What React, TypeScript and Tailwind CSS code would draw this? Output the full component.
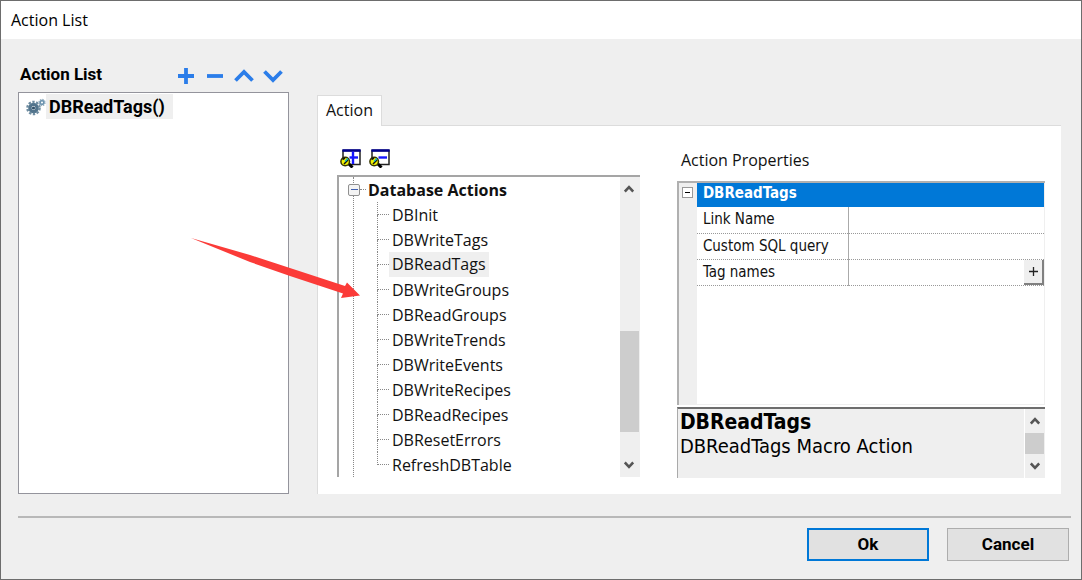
import type { ReactNode } from 'react';

const actions = [
  'DBInit',
  'DBWriteTags',
  'DBReadTags',
  'DBWriteGroups',
  'DBReadGroups',
  'DBWriteTrends',
  'DBWriteEvents',
  'DBWriteRecipes',
  'DBReadRecipes',
  'DBResetErrors',
  'RefreshDBTable',
];

const properties = ['Link Name', 'Custom SQL query', 'Tag names'];

function ToolButton({ label, children }: { label: string; children: ReactNode }) {
  return (
    <button type="button" aria-label={label} className="flex size-5 items-center justify-center">
      <svg viewBox="0 0 20 20" className="size-5" fill="none" stroke="#2b7de9" strokeWidth="3.8">
        {children}
      </svg>
    </button>
  );
}

function Gears() {
  return (
    <svg viewBox="0 0 20 18" className="h-[18px] w-5 shrink-0" fill="none">
      <circle cx="7.5" cy="10" r="3.6" stroke="#52748c" strokeWidth="3.4" />
      <circle cx="7.5" cy="10" r="6" stroke="#6f8da1" strokeWidth="2.6" strokeDasharray="2.3 1.47" />
      <circle cx="7.5" cy="10" r="1.6" fill="#2e4f68" />
      <circle cx="16" cy="4.5" r="1.9" stroke="#6b93af" strokeWidth="1.8" />
      <circle cx="16" cy="4.5" r="3" stroke="#8fabbd" strokeWidth="1.4" strokeDasharray="1.3 1.05" />
    </svg>
  );
}

function TreeToolIcon({ plus }: { plus?: boolean }) {
  return (
    <svg viewBox="0 0 21 20" className="h-5 w-[21px]" fill="none">
      <rect x="3" y="2.5" width="17" height="14" fill="#fff" stroke="#222" strokeWidth="1.5" />
      <path d="M2.4 2.5H20.6" stroke="#00008b" strokeWidth="2.6" />
      <path d="M9.5 9.5H18" stroke="#1515ff" strokeWidth="2.4" />
      {plus && <path d="M13 3.5V16" stroke="#1515ff" strokeWidth="2.4" />}
      <path d="M8.5 15.5L12.5 19.5" stroke="#000" strokeWidth="3" />
      <circle cx="5.2" cy="13.5" r="4.3" fill="#f2f200" stroke="#333300" strokeWidth="1.5" />
      <path d="M2.5 11.5L5 10M4 16L8 12" stroke="#111" strokeWidth="1.5" />
      <path d="M5 13.5L8 10.5" stroke="#00b8c8" strokeWidth="1.4" />
    </svg>
  );
}

function ScrollButton({ up }: { up?: boolean }) {
  return (
    <button
      type="button"
      aria-label={up ? 'Scroll up' : 'Scroll down'}
      className="flex h-6 w-full shrink-0 items-center justify-center pr-px"
    >
      <svg viewBox="0 0 10 8" className="h-2 w-2.5" fill="none" stroke="#555" strokeWidth="2.6">
        <path d={up ? 'M.8 6.5L5 2.2L9.2 6.5' : 'M.8 1.5L5 5.8L9.2 1.5'} />
      </svg>
    </button>
  );
}

function ActionTree() {
  return (
    <div className="flex border-t-2 border-l-2 border-[#a5a5a5] bg-white">
      <ul role="tree" aria-label="Actions" className="ml-3.5 flex-1 border-l border-dotted border-[#888]">
        <li role="treeitem" aria-expanded="true">
          <div className="flex h-[25px] items-center">
            <button
              type="button"
              aria-label="Collapse Database Actions"
              className="-ml-1.5 flex size-3 items-center justify-center rounded-xs border border-[#909090] bg-[#f4f4f4]"
            >
              <span className="h-px w-[7px] bg-[#4060b0]" />
            </button>
            <span className="w-1.5 border-t border-dotted border-[#888]" />
            <span className="pl-0.5 font-bold">Database Actions</span>
          </div>
          <ul role="group" className="ml-[23px]">
            {actions.map((name) => (
              <li
                key={name}
                role="treeitem"
                aria-selected={name === 'DBReadTags'}
                className="group flex h-[25px] items-center"
              >
                <span className="flex w-3 flex-col self-stretch">
                  <span className="h-[13px] border-b border-l border-dotted border-[#888]" />
                  <span className="h-3 border-l border-dotted border-[#888] group-last:border-l-0" />
                </span>
                <span className={name === 'DBReadTags' ? 'bg-[#efefef] px-[3px] leading-[25px]' : 'px-[3px]'}>
                  {name}
                </span>
              </li>
            ))}
          </ul>
        </li>
      </ul>
      <div className="flex w-5 flex-col bg-[#efefef]">
        <ScrollButton up />
        <div className="flex-[130]" />
        <div className="mr-px flex-[101] bg-[#cdcdcd]" />
        <div className="flex-[21]" />
        <ScrollButton />
      </div>
    </div>
  );
}

function PropertyGrid() {
  return (
    <div className="flex flex-1 border-t-2 border-l-2 border-[#b0b0b0] bg-white">
      <div className="flex w-[18px] shrink-0 justify-center bg-[#efefef] pt-1">
        <button
          type="button"
          aria-label="Collapse DBReadTags"
          className="flex size-[11px] items-center justify-center border border-[#999] bg-white"
        >
          <span className="h-px w-[5px] bg-black" />
        </button>
      </div>
      <div className="flex-1 border-r border-b border-[#efefef]">
        <table className="w-full table-fixed border-collapse text-left font-['DejaVu_Sans_Condensed','DejaVu_Sans',sans-serif] text-[15px]">
          <colgroup>
            <col className="w-[152px]" />
            <col />
          </colgroup>
          <thead>
            <tr className="h-6 bg-[#0078d7]">
              <th colSpan={2} className="px-1.5 leading-5 text-white align-top">
                DBReadTags
              </th>
            </tr>
          </thead>
          <tbody>
            {properties.map((name) => (
              <tr key={name} className="h-[26px] border-b border-dotted border-[#999]">
                <th className="border-r border-solid border-r-[#aaa] px-1.5 py-0 font-normal leading-[25px]">
                  <label htmlFor={name}>{name}</label>
                </th>
                <td className="p-0">
                  <div className="flex h-[25px]">
                    <input id={name} type="text" className="w-full min-w-0 px-1 outline-none" />
                    {name === 'Tag names' && (
                      <button
                        type="button"
                        aria-label="Edit tag names"
                        className="flex w-5 shrink-0 items-center justify-center border-r-2 border-b-2 border-[#808080] bg-[#efefef]"
                      >
                        <svg viewBox="0 0 9 9" className="size-[9px]" stroke="#222" strokeWidth="1.3">
                          <path d="M0 4.5H9M4.5 0V9" />
                        </svg>
                      </button>
                    )}
                  </div>
                </td>
              </tr>
            ))}
          </tbody>
        </table>
      </div>
    </div>
  );
}

function Arrow() {
  return (
    <svg
      viewBox="0 0 170 62"
      className="pointer-events-none absolute top-[236px] left-[189px] h-[62px] w-[170px]"
      fill="#fb3b38"
    >
      <path d="M1 1L60 18L155 49L157 45.5L170 58.5L151 61L153 56.5L100 39L60 25Z" />
    </svg>
  );
}

export default function App() {
  return (
    <div className="relative flex min-h-screen flex-col border border-[#6d6d6d] bg-[#efefef] font-['Open_Sans','Noto_Sans',sans-serif] text-base text-[#111]">
      <header className="flex h-[38px] items-center bg-white px-2.5 text-black">Action List</header>

      <main className="flex flex-1 pt-5 pr-5 pb-[22px] pl-[17px]">
        <section className="flex w-[271px] shrink-0 flex-col">
          <div className="flex h-[33px] items-center justify-between pr-1.5 pb-0.5 pl-0.5">
            <h2 className="font-['Roboto',sans-serif] text-[17px] font-bold text-black">Action List</h2>
            <div className="flex gap-[9px] pt-0.5">
              <ToolButton label="Add action">
                <path d="M2 10H18M10 2V18" />
              </ToolButton>
              <ToolButton label="Remove action">
                <path d="M2 10H18" />
              </ToolButton>
              <ToolButton label="Move up">
                <path d="M1.5 14.5L10 6L18.5 14.5" />
              </ToolButton>
              <ToolButton label="Move down">
                <path d="M1.5 5.5L10 14L18.5 5.5" />
              </ToolButton>
            </div>
          </div>
          <ul className="flex-1 border border-[#94949c] bg-white py-px pl-[7px]">
            <li className="flex items-center">
              <Gears />
              <span className="bg-[#efefef] pr-2 pl-[3px] font-['Roboto',sans-serif] text-lg leading-[25px] font-bold text-black">
                DBReadTags()
              </span>
            </li>
          </ul>
        </section>

        <section className="ml-7 flex min-w-0 flex-1 flex-col pt-9">
          <div role="tablist" className="flex">
            <button
              type="button"
              role="tab"
              aria-selected="true"
              className="relative z-10 -mb-px h-[31px] border border-b-0 border-[#dcdcdc] bg-white px-2 pb-0.5"
            >
              Action
            </button>
          </div>
          <div
            role="tabpanel"
            className="grid flex-1 grid-cols-[302fr_367fr] gap-[37px] border-t border-l border-[#dcdcdc] bg-white pt-[22px] pr-4 pb-4 pl-[19px]"
          >
            <div className="flex flex-col">
              <div className="flex h-[27px] items-start gap-2 pl-[3px]">
                <button type="button" aria-label="Expand all">
                  <TreeToolIcon plus />
                </button>
                <button type="button" aria-label="Collapse all">
                  <TreeToolIcon />
                </button>
              </div>
              <ActionTree />
            </div>

            <div className="flex flex-col">
              <h3 className="h-[33px] pl-1 leading-6">Action Properties</h3>
              <PropertyGrid />
              <div className="mt-0.5 flex h-[71px] border-t-2 border-l border-[#6d6d6d] border-l-[#aaa] bg-[#efefef]">
                <div className="flex-1 border-r border-white pt-px pl-0.5 font-['DejaVu_Sans_Condensed','DejaVu_Sans',sans-serif] text-xl leading-6 text-black">
                  <p className="text-[21px] font-bold">DBReadTags</p>
                  <p>DBReadTags Macro Action</p>
                </div>
                <div className="flex w-5 flex-col">
                  <ScrollButton up />
                  <div className="mr-px flex-1 bg-[#cdcdcd]" />
                  <ScrollButton />
                </div>
              </div>
            </div>
          </div>
        </section>
      </main>

      <footer className="mr-2.5 ml-[17px] flex justify-end gap-[18px] border-t-2 border-[#b8b8b8] pt-2.5 pr-0.5 pb-[18px] font-['Roboto',sans-serif] text-[17px] font-bold text-black">
        <button type="button" className="h-[33px] w-[122px] border-2 border-[#0078d7] bg-[#e1e1e1]">
          Ok
        </button>
        <button type="button" className="h-[33px] w-[122px] border border-[#adadad] bg-[#e1e1e1]">
          Cancel
        </button>
      </footer>

      <Arrow />
    </div>
  );
}
